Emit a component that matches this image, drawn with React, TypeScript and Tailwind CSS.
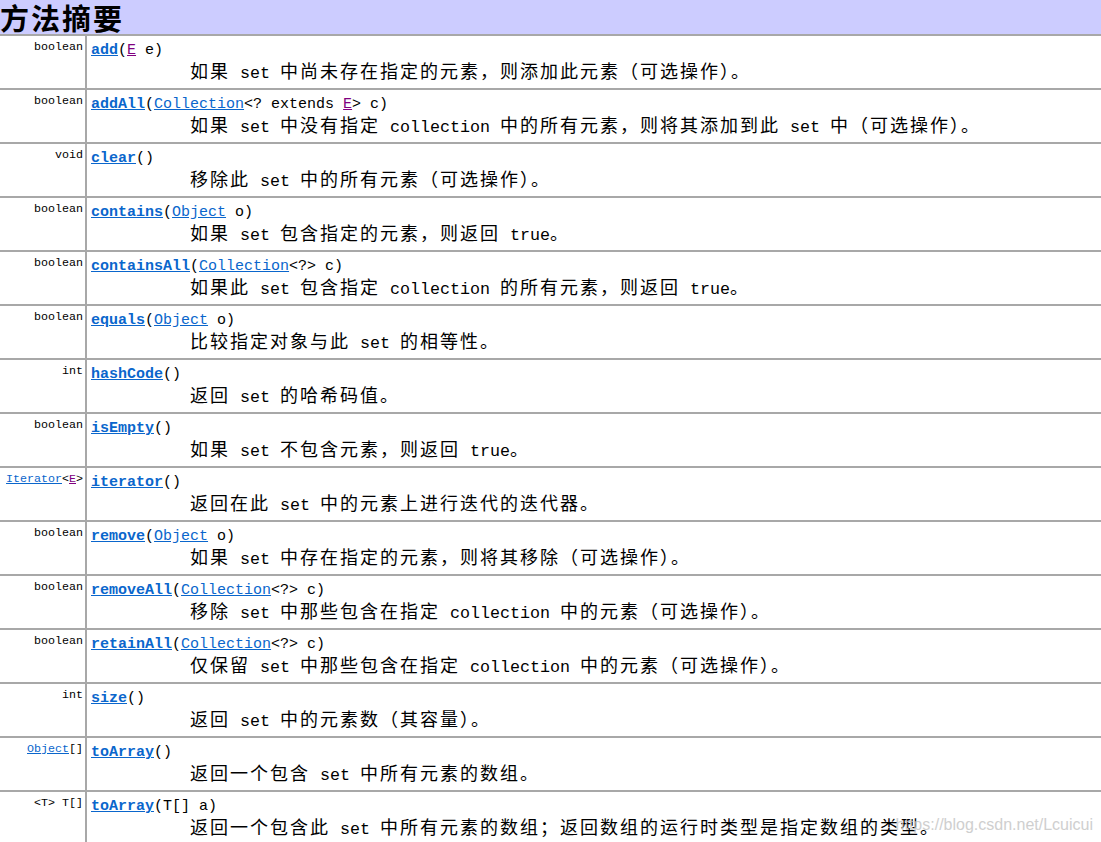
import React from "react";

const BLUE = "text-[#0a66cc]";

type Part = { t: string; k?: "link" | "var" | "bold" };

type Row = { type: React.ReactNode; name: string; params: Part[]; desc: string };

const L = (t: string): Part => ({ t, k: "link" });
const V = (t: string): Part => ({ t, k: "var" });
const P = (t: string): Part => ({ t });

const rows: Row[] = [
  { type: "boolean", name: "add", params: [P("("), V("E"), P(" e)")], desc: "如果 set 中尚未存在指定的元素，则添加此元素（可选操作）。" },
  { type: "boolean", name: "addAll", params: [P("("), L("Collection"), P("<? extends "), V("E"), P("> c)")], desc: "如果 set 中没有指定 collection 中的所有元素，则将其添加到此 set 中（可选操作）。" },
  { type: "void", name: "clear", params: [P("()")], desc: "移除此 set 中的所有元素（可选操作）。" },
  { type: "boolean", name: "contains", params: [P("("), L("Object"), P(" o)")], desc: "如果 set 包含指定的元素，则返回 true。" },
  { type: "boolean", name: "containsAll", params: [P("("), L("Collection"), P("<?> c)")], desc: "如果此 set 包含指定 collection 的所有元素，则返回 true。" },
  { type: "boolean", name: "equals", params: [P("("), L("Object"), P(" o)")], desc: "比较指定对象与此 set 的相等性。" },
  { type: "int", name: "hashCode", params: [P("()")], desc: "返回 set 的哈希码值。" },
  { type: "boolean", name: "isEmpty", params: [P("()")], desc: "如果 set 不包含元素，则返回 true。" },
  {
    type: (
      <>
        <span className={`${BLUE} underline`}>Iterator</span>
        {"<"}
        <span className="text-[#800080] underline">E</span>
        {">"}
      </>
    ),
    name: "iterator",
    params: [P("()")],
    desc: "返回在此 set 中的元素上进行迭代的迭代器。",
  },
  { type: "boolean", name: "remove", params: [P("("), L("Object"), P(" o)")], desc: "如果 set 中存在指定的元素，则将其移除（可选操作）。" },
  { type: "boolean", name: "removeAll", params: [P("("), L("Collection"), P("<?> c)")], desc: "移除 set 中那些包含在指定 collection 中的元素（可选操作）。" },
  { type: "boolean", name: "retainAll", params: [P("("), L("Collection"), P("<?> c)")], desc: "仅保留 set 中那些包含在指定 collection 中的元素（可选操作）。" },
  { type: "int", name: "size", params: [P("()")], desc: "返回 set 中的元素数（其容量）。" },
  {
    type: (
      <>
        <span className={`${BLUE} underline`}>Object</span>
        {"[]"}
      </>
    ),
    name: "toArray",
    params: [P("()")],
    desc: "返回一个包含 set 中所有元素的数组。",
  },
  { type: "<T> T[]", name: "toArray", params: [P("(T[] a)")], desc: "返回一个包含此 set 中所有元素的数组；返回数组的运行时类型是指定数组的类型。" },
];

function Desc({ text }: { text: string }) {
  const runs = text.match(/[\x00-\x7f]+|[^\x00-\x7f]+/g) || [];
  return (
    <div className="ml-[99px] h-[20px] whitespace-pre leading-[20px] text-black">
      {runs.map((r, i) =>
        /^[\x00-\x7f]+$/.test(r) ? (
          <span key={i} className="text-[16.67px] tracking-normal [font-family:'Liberation_Mono',monospace]">
            {r}
          </span>
        ) : (
          <span key={i} className="text-[18px] tracking-[2px] [font-family:'Noto_Sans_CJK_SC',sans-serif]">
            {r}
          </span>
        )
      )}
    </div>
  );
}

export default function App() {
  return (
    <div className="relative h-[842px] w-[1101px] overflow-hidden bg-white">
      <div className="h-[34px] bg-[#ccccff] text-[29px] font-bold leading-[34px] tracking-[2px] text-black [font-family:'Noto_Sans_CJK_SC',sans-serif]">
        方法摘要
      </div>
      {rows.map((r, i) => (
        <div key={i} className="flex h-[54px] border-t-2 border-[#a8a8a8]">
          <div className="w-[87px] shrink-0 border-r-2 border-[#a8a8a8] pr-[2px] pt-[4px] text-right text-[11.67px] leading-[14px] whitespace-pre text-black [font-family:'Liberation_Mono',monospace]">
            {r.type}
          </div>
          <div className="flex-1 pl-[4px] pt-[6px]">
            <div className="h-[18px] whitespace-pre text-[15px] leading-[18px] text-black [font-family:'Liberation_Mono',monospace]">
              <span className={`${BLUE} font-bold underline`}>{r.name}</span>
              {r.params.map((p, j) =>
                p.k === "link" ? (
                  <span key={j} className={`${BLUE} underline`}>
                    {p.t}
                  </span>
                ) : p.k === "var" ? (
                  <span key={j} className="text-[#800080] underline">
                    {p.t}
                  </span>
                ) : (
                  <span key={j}>{p.t}</span>
                )
              )}
            </div>
            <Desc text={r.desc} />
          </div>
        </div>
      ))}
      <div className="pointer-events-none absolute right-[8px] top-[815px] text-[16px] leading-[20px] text-[#c4c4c4] opacity-80 [font-family:'Liberation_Sans',sans-serif]">
        https://blog.csdn.net/Lcuicui
      </div>
    </div>
  );
}
